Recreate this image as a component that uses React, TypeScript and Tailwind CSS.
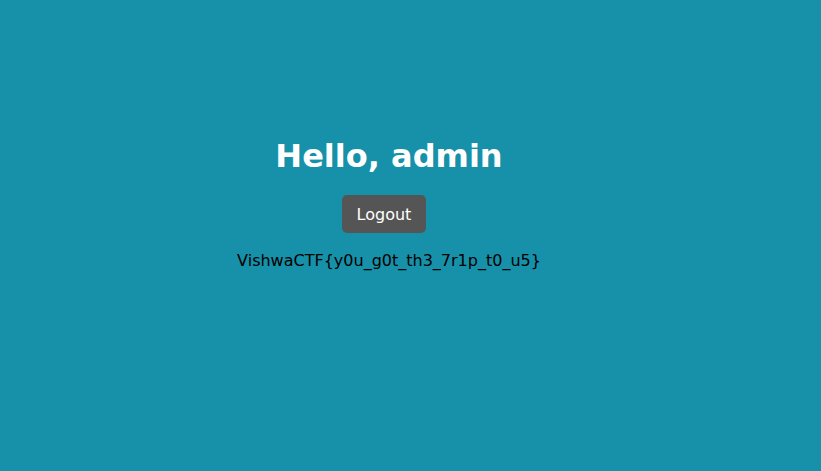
export default function App() {
  return (
    <div className="min-h-[471px] w-full bg-[#1791a9] font-['DejaVu_Sans',sans-serif]">
      <div className="flex flex-col items-center pt-[138px] pr-[43px]">
        <h1 className="text-[32px] leading-[37px] font-bold text-white">Hello, admin</h1>
        <button className="mt-[20px] mr-[10px] h-[38px] w-[84px] rounded-[5px] bg-[#555555] pt-[2px] text-[16px] text-white">
          Logout
        </button>
        <p className="mt-[18px] text-[16px] leading-[19px] text-black">VishwaCTF{"{"}y0u_g0t_th3_7r1p_t0_u5{"}"}</p>
      </div>
    </div>
  );
}
